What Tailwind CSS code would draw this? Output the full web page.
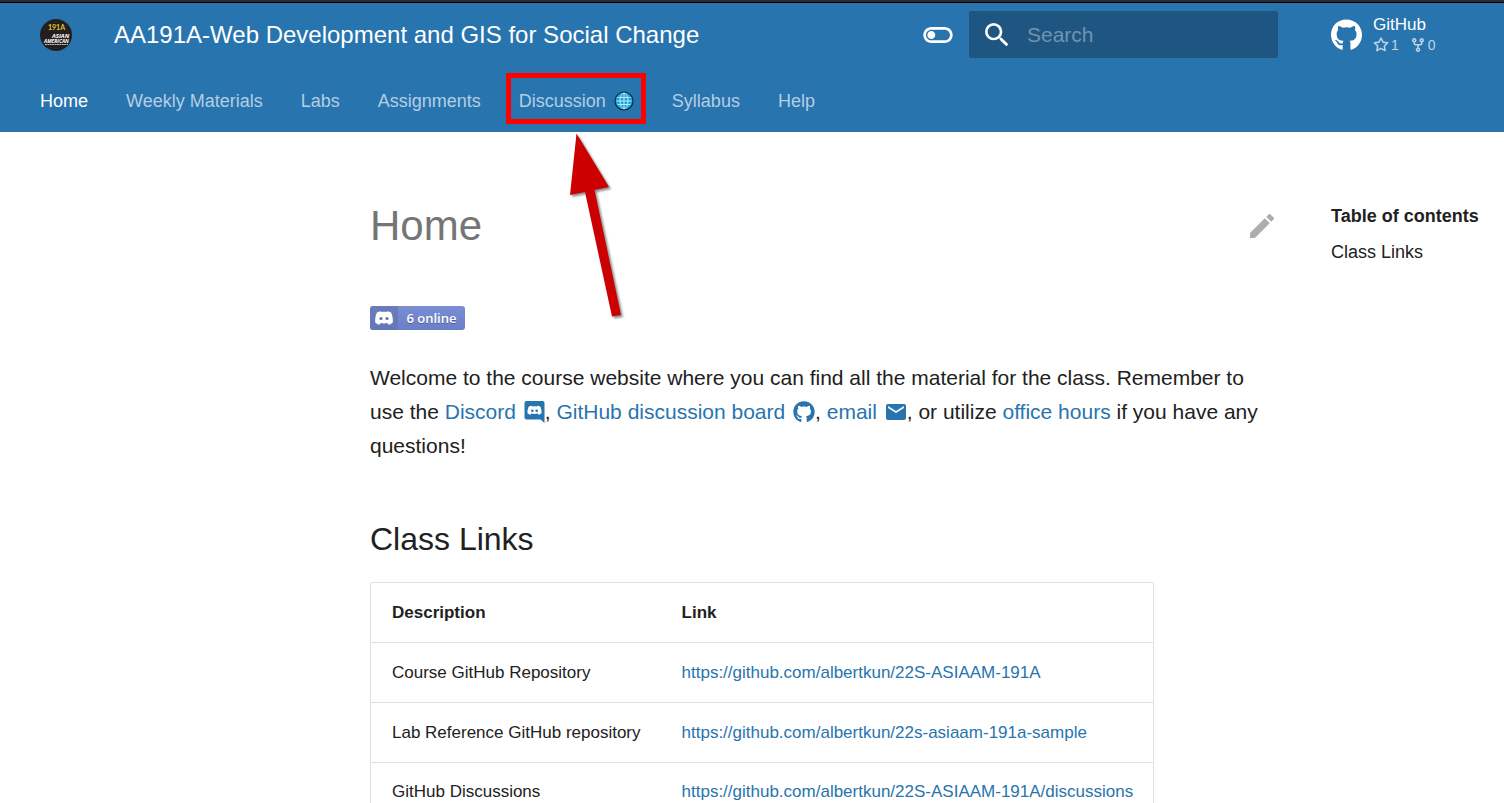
<!DOCTYPE html>
<html lang="en">
<head>
<meta charset="utf-8">
<title>AA191A-Web Development and GIS for Social Change</title>
<script src="https://cdn.jsdelivr.net/npm/@tailwindcss/browser@4"></script>
</head>
<body class="h-screen overflow-hidden bg-white font-['Liberation_Sans',Arial,sans-serif] text-[#212121]">
<svg class="hidden" aria-hidden="true">
  <symbol id="github" viewBox="0 0 496 512"><path fill="currentColor" d="M165.9 397.4c0 2-2.3 3.6-5.2 3.6-3.3.3-5.6-1.3-5.6-3.6 0-2 2.3-3.6 5.2-3.6 3-.3 5.6 1.3 5.6 3.6zm-31.1-4.5c-.7 2 1.3 4.3 4.3 4.9 2.6 1 5.6 0 6.2-2s-1.3-4.3-4.3-5.2c-2.6-.7-5.5.3-6.2 2.3zm44.2-1.7c-2.9.7-4.9 2.6-4.6 4.9.3 2 2.9 3.3 5.9 2.6 2.9-.7 4.9-2.6 4.6-4.6-.3-1.9-3-3.2-5.9-2.9zM244.8 8C106.1 8 0 113.3 0 252c0 110.9 69.8 205.8 169.5 239.2 12.8 2.3 17.3-5.6 17.3-12.1 0-6.2-.3-40.4-.3-61.4 0 0-70 15-84.7-29.8 0 0-11.4-29.1-27.8-36.6 0 0-22.9-15.7 1.6-15.4 0 0 24.9 2 38.6 25.8 21.9 38.6 58.6 27.5 72.9 20.9 2.3-16 8.800-27.1 16-33.7-55.9-6.2-112.3-14.3-112.3-110.5 0-27.5 7.600-41.3 23.600-58.9-2.600-6.500-11.1-33.3 2.600-67.9 20.9-6.500 69 27 69 27 20-5.600 41.500-8.500 62.800-8.500s42.800 2.900 62.800 8.500c0 0 48.1-33.600 69-27 13.700 34.700 5.200 61.400 2.600 67.900 16 17.700 25.800 31.500 25.800 58.900 0 96.500-58.900 104.200-114.800 110.500 9.200 7.900 17 22.900 17 46.400 0 33.700-.3 75.400-.3 83.600 0 6.500 4.600 14.400 17.300 12.100C428.200 457.800 496 362.900 496 252 496 113.300 383.500 8 244.800 8z"/></symbol>
</svg>
<div class="h-[3px] border-b border-black bg-[#2b2a33]"></div>
<header class="bg-[#2874ae] text-white">
  <div class="flex h-[63px] items-center pl-10">
    <a href="#" aria-label="Course home" class="shrink-0">
      <svg class="size-8" viewBox="0 0 32 32">
        <circle cx="16" cy="16" r="16" fill="#231f20"/>
        <text x="8" y="11" font-size="7" fill="#e0c62f" font-family="Lato, sans-serif" font-weight="bold">191A</text>
        <text x="12" y="19" font-size="6" fill="#fff" font-family="Open Sans, sans-serif" font-weight="bold" font-style="italic">ASIAN</text>
        <text x="4" y="24" font-size="5" fill="#fff" font-family="Open Sans, sans-serif" font-weight="bold" font-style="italic">AMERICAN</text>
        <path d="M5 25.5h23" stroke="#bbb" stroke-width="1" stroke-dasharray="2 .4"/>
      </svg>
    </a>
    <div class="ml-[42px] flex-1 truncate text-2xl">AA191A-Web Development and GIS for Social Change</div>
    <button type="button" aria-label="Switch colour scheme" class="mr-[15px]">
      <svg class="size-8" viewBox="0 0 24 24" fill="currentColor"><path d="M17 6H7c-3.310 0-6 2.690-6 6s2.690 6 6 6h10c3.310 0 6-2.690 6-6s-2.690-6-6-6m0 10H7c-2.210 0-4-1.790-4-4s1.790-4 4-4h10c2.210 0 4 1.790 4 4s-1.790 4-4 4M7 9c-1.660 0-3 1.340-3 3s1.340 3 3 3 3-1.340 3-3-1.340-3-3-3"/></svg>
    </button>
    <label class="flex h-[47px] w-[309px] items-center rounded-xs bg-[#1e5681] pl-3">
      <svg class="size-8 shrink-0" viewBox="0 0 24 24" fill="currentColor"><path d="M9.5 3A6.5 6.5 0 0 1 16 9.5c0 1.61-.59 3.09-1.56 4.23l.27.27h.79l5 5-1.5 1.5-5-5v-.79l-.27-.27A6.516 6.516 0 0 1 9.5 16 6.5 6.5 0 0 1 3 9.5 6.5 6.5 0 0 1 9.5 3m0 2C7 5 5 7 5 9.5S7 14 9.5 14 14 12 14 9.5 12 5 9.5 5"/></svg>
      <input type="text" aria-label="Search" placeholder="Search" class="ml-3.5 min-w-0 flex-1 bg-transparent text-[21px] outline-none placeholder:text-[#7193ad]">
    </label>
    <a href="#" class="ml-[53px] flex w-[173px] items-center">
      <svg class="h-8 w-[31px]"><use href="#github"/></svg>
      <span class="ml-[11px] flex flex-col">
        <span class="text-[17px] leading-5">GitHub</span>
        <span class="flex items-center text-sm leading-5 text-[#bfd5e7]">
          <svg class="mr-0.5 size-4" viewBox="0 0 16 16" fill="currentColor"><path fill-rule="evenodd" d="M8 .25a.75.75 0 0 1 .673.418l1.882 3.815 4.21.612a.75.75 0 0 1 .416 1.279l-3.046 2.97.719 4.192a.75.75 0 0 1-1.088.791L8 12.347l-3.766 1.98a.75.75 0 0 1-1.088-.79l.72-4.194L.818 6.374a.75.75 0 0 1 .416-1.28l4.21-.611L7.327.668A.75.75 0 0 1 8 .25m0 2.445L6.615 5.5a.75.75 0 0 1-.564.41l-3.097.45 2.24 2.184a.75.75 0 0 1 .216.664l-.528 3.084 2.769-1.456a.75.75 0 0 1 .698 0l2.77 1.456-.53-3.084a.75.75 0 0 1 .216-.664l2.24-2.183-3.096-.45a.75.75 0 0 1-.564-.41z"/></svg>1
          <svg class="ml-[11px] mr-0.5 size-4" viewBox="0 0 16 16" fill="currentColor"><path fill-rule="evenodd" d="M5 3.25a.75.75 0 1 1-1.5 0 .75.75 0 0 1 1.5 0m0 2.122a2.25 2.25 0 1 0-1.5 0v.878A2.25 2.25 0 0 0 5.75 8.5h1.5v2.128a2.251 2.251 0 1 0 1.5 0V8.5h1.5a2.25 2.25 0 0 0 2.25-2.25v-.878a2.25 2.25 0 1 0-1.5 0v.878a.75.75 0 0 1-.75.75h-4.5A.75.75 0 0 1 5 6.25zm3.75 7.378a.75.75 0 1 1-1.5 0 .75.75 0 0 1 1.5 0m3-8.75a.75.75 0 1 0 0-1.5.75.75 0 0 0 0 1.5"/></svg>0
        </span>
      </span>
    </a>
  </div>
  <nav class="flex h-[66px] items-center gap-[38px] pl-10 pt-1 text-lg whitespace-nowrap text-[#b4cee2]">
    <a href="#" class="text-white">Home</a>
    <a href="#">Weekly Materials</a>
    <a href="#">Labs</a>
    <a href="#">Assignments</a>
    <a href="#" class="relative flex items-center">Discussion
      <svg class="ml-2 size-5" viewBox="0 0 20 20">
        <circle cx="10" cy="10" r="9" fill="#18a3dc" stroke="#0d2c42" stroke-width="1.2"/>
        <g fill="none" stroke="#bfe6f5" stroke-width="1"><path d="M10 2v16M2.5 10h15M3.5 6.5h13M3.5 13.5h13"/><ellipse cx="10" cy="10" rx="4" ry="7.8"/></g>
      </svg>
      <span class="absolute -left-[13px] -top-3.5 h-[51px] w-[140px] border-5 border-[#ff0000]"></span>
      <svg class="absolute left-[46px] top-[45px] h-[192px] w-[64px] drop-shadow-[2px_2px_1px_rgba(0,0,0,0.45)]" viewBox="0 0 64 192"><path fill="#c00" d="M11.5 1.5 44 55l-14.5 3L56 183l-9 1.5L20 60 5 63z"/></svg>
    </a>
    <a href="#">Syllabus</a>
    <a href="#">Help</a>
  </nav>
</header>
<div class="flex pl-[370px]">
  <main class="min-w-0 flex-1 pt-[66px]">
    <div class="flex items-center justify-between">
      <h1 class="text-[42px] leading-[56px] text-[#757575]">Home</h1>
      <a href="#" aria-label="Edit this page" class="-mr-1"><svg class="size-8" viewBox="0 0 24 24" fill="#adadad"><path d="M20.71 7.04c.39-.39.39-1.04 0-1.41l-2.34-2.34c-.37-.39-1.02-.39-1.41 0l-1.84 1.83 3.75 3.75M3 17.25V21h3.75L17.81 9.93l-3.75-3.75z"/></svg></a>
    </div>
    <a href="#" class="mt-[52px] flex h-6 w-[95px] overflow-hidden rounded-[3px] bg-linear-to-b from-[#7a8ed6] to-[#697ec4] text-white">
      <span class="flex w-7 items-center justify-center bg-[#6274b0]/70">
        <svg class="w-[18px]" viewBox="0 0 18 14"><path fill="#fff" d="M6 1 5.6.3C4.3.5 3 .9 2 1.5.6 4 0 7 .2 11.5 1.5 12.800 3 13.400 4.500 13.700l1-1.700c2 .6 5 .6 7 0l1 1.700c1.500-.3 3-.9 4.300-2.200.2-4.500-.4-7.500-1.800-10C15 .9 13.700.5 12.400.3L12 1c-2-.3-4-.3-6 0z"/><g fill="#6274b0"><circle cx="6" cy="7.5" r="1.6"/><circle cx="12" cy="7.5" r="1.6"/></g></svg>
      </span>
      <span class="flex-1 text-center font-['Open_Sans',sans-serif] text-[13px] leading-6 font-semibold text-shadow-[0_1px_0_rgba(0,0,0,0.3)]">6 online</span>
    </a>
    <p class="mt-[31px] text-[21px] leading-[34px]">Welcome to the course website where you can find all the material for the class. Remember to use the <a href="#" class="text-[#2874ae]">Discord <svg class="ml-0.5 inline h-6 w-[21px] align-[-5px]" viewBox="0 0 21 24"><path fill="#2874ae" d="M2.5 1h16A2 2 0 0 1 20.5 3v20l-4-3.5h-14A2 2 0 0 1 .5 17.5V3a2 2 0 0 1 2-2z"/><path fill="#fff" d="m8 6.5-.4-.7c-1.2.1-2.2.5-2.9 1C3.7 9 3.3 11 3.5 13.3c1 .9 2 1.2 3 1.4l.8-1.1c2 .5 4.4.5 6.4 0l.8 1.1c1-.2 2-.5 3-1.4.2-2.3-.2-4.3-1.2-6.5-.7-.5-1.7-.9-2.9-1l-.4.7c-1.7-.3-3.3-.3-5 0z"/><g fill="#2874ae"><circle cx="8.3" cy="10.8" r="1.3"/><circle cx="12.7" cy="10.8" r="1.3"/></g></svg></a>, <a href="#" class="text-[#2874ae]">GitHub discussion board <svg class="ml-0.5 inline h-[22px] w-[22px] align-[-4px]"><use href="#github"/></svg></a>, <a href="#" class="text-[#2874ae]">email <svg class="-mr-px ml-px inline size-6 align-[-5px]" viewBox="0 0 24 24" fill="currentColor"><path d="m20 8-8 5-8-5V6l8 5 8-5m0-2H4c-1.11 0-2 .89-2 2v12a2 2 0 0 0 2 2h16a2 2 0 0 0 2-2V6a2 2 0 0 0-2-2" transform="translate(0 0)"/></svg></a>, or utilize <a href="#" class="text-[#2874ae]">office hours</a> if you have any questions!</p>
    <h2 class="mt-[53px] text-[32px] leading-[46px]">Class Links</h2>
    <div class="mt-5 w-fit rounded-xs border border-[#e0e0e0]">
      <table class="text-left text-[17px] leading-6 whitespace-nowrap">
        <thead><tr class="h-[59px]"><th class="pt-0.5 pl-[21px] pr-5">Description</th><th class="pt-0.5 pl-[21px] pr-5">Link</th></tr></thead>
        <tbody>
          <tr class="h-[60px] border-t border-[#e0e0e0]"><td class="pt-0.5 pl-[21px] pr-5">Course GitHub Repository</td><td class="pt-0.5 pl-[21px] pr-5"><a href="#" class="text-[#2874ae]">https://github.com/albertkun/22S-ASIAAM-191A</a></td></tr>
          <tr class="h-[60px] border-t border-[#e0e0e0]"><td class="pt-0.5 pl-[21px] pr-5">Lab Reference GitHub repository</td><td class="pt-0.5 pl-[21px] pr-5"><a href="#" class="text-[#2874ae]">https://github.com/albertkun/22s-asiaam-191a-sample</a></td></tr>
          <tr class="h-[60px] border-t border-[#e0e0e0]"><td class="pl-[21px] pr-5">GitHub Discussions</td><td class="pl-[21px] pr-5"><a href="#" class="text-[#2874ae]">https://github.com/albertkun/22S-ASIAAM-191A/discussions</a></td></tr>
        </tbody>
      </table>
    </div>
  </main>
  <aside class="ml-[57px] w-[173px] shrink-0 pt-[72px] text-lg leading-6">
    <h3 class="font-bold whitespace-nowrap">Table of contents</h3>
    <a href="#" class="mt-3 block">Class Links</a>
  </aside>
</div>
</body>
</html>
